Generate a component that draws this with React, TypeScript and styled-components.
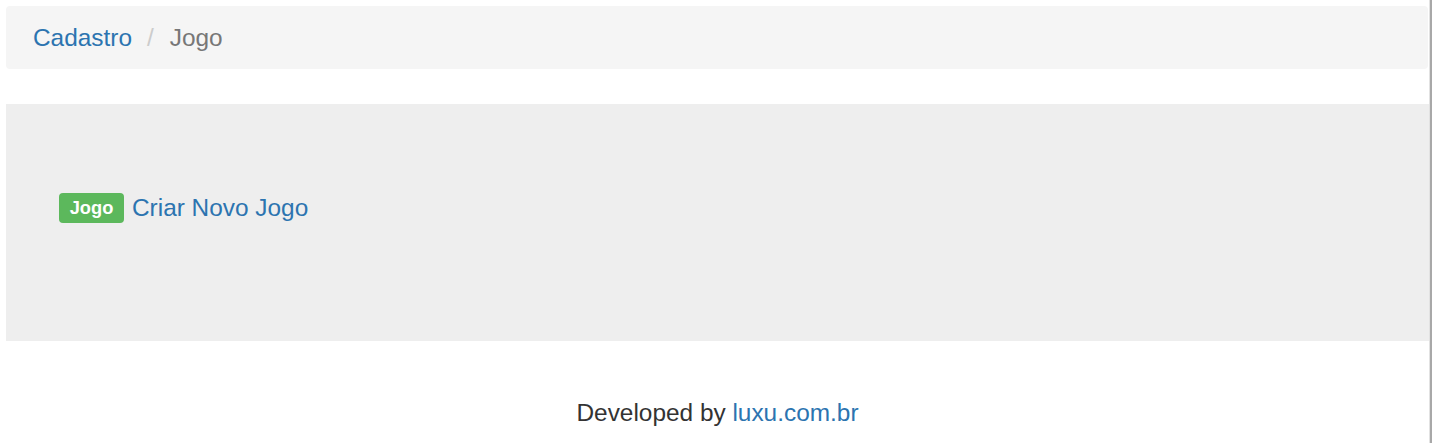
import React from "react";
import styled, { createGlobalStyle } from "styled-components";

const Global = createGlobalStyle`
  html, body { margin: 0; padding: 0; background: #fff; }
  body { font-family: "Liberation Sans", Arial, sans-serif; color: #333; }
  a { text-decoration: none; }
`;

const Frame = styled.div`
  display: flex;
  min-height: 443px;
`;

const Main = styled.div`
  flex: 1;
  display: flex;
  flex-direction: column;
  padding: 6px 0 0 6px;
`;

const Edge = styled.div`
  width: 3px;
  background: linear-gradient(to right, #e2e2e2 0, #e2e2e2 1px, #a8a8a8 1px, #a8a8a8 3px);
`;

const Breadcrumb = styled.ol`
  list-style: none;
  margin: 0 1px 0 0;
  padding: 0 0 0 27px;
  height: 63px;
  display: flex;
  align-items: center;
  background: #f5f5f5;
  border-radius: 4px;
  font-size: 24.4px;
`;

const Crumb = styled.li<{ $active?: boolean }>`
  color: ${(p) => (p.$active ? "#777" : "#2c74b0")};
`;

const Sep = styled.li`
  color: #ccc;
  padding: 0 16px 0 15px;
`;

const Jumbotron = styled.section`
  margin-top: 35px;
  height: 237px;
  box-sizing: border-box;
  background: #eee;
  padding: 89px 0 0 53px;
  display: flex;
  align-items: flex-start;
`;

const Row = styled.div`
  display: flex;
  align-items: center;
  gap: 8px;
  height: 30px;
`;

const Label = styled.span`
  display: inline-flex;
  align-items: center;
  justify-content: center;
  background: #5cb85c;
  color: #fff;
  font-weight: bold;
  font-size: 18.3px;
  height: 30px;
  width: 65px;
  box-sizing: border-box;
  border-radius: 4px;
`;

const Link = styled.a`
  color: #2c74b0;
  font-size: 24.4px;
  line-height: 1;
`;

const Footer = styled.footer`
  text-align: center;
  font-size: 24.4px;
  padding-top: 58px;
`;

export default function App() {
  return (
    <>
      <Global />
      <Frame>
        <Main>
          <Breadcrumb>
            <Crumb>Cadastro</Crumb>
            <Sep>/</Sep>
            <Crumb $active>Jogo</Crumb>
          </Breadcrumb>
          <Jumbotron>
            <Row>
              <Label>Jogo</Label>
              <Link href="#">Criar Novo Jogo</Link>
            </Row>
          </Jumbotron>
          <Footer>
            Developed by <Link href="#">luxu.com.br</Link>
          </Footer>
        </Main>
        <Edge />
      </Frame>
    </>
  );
}
